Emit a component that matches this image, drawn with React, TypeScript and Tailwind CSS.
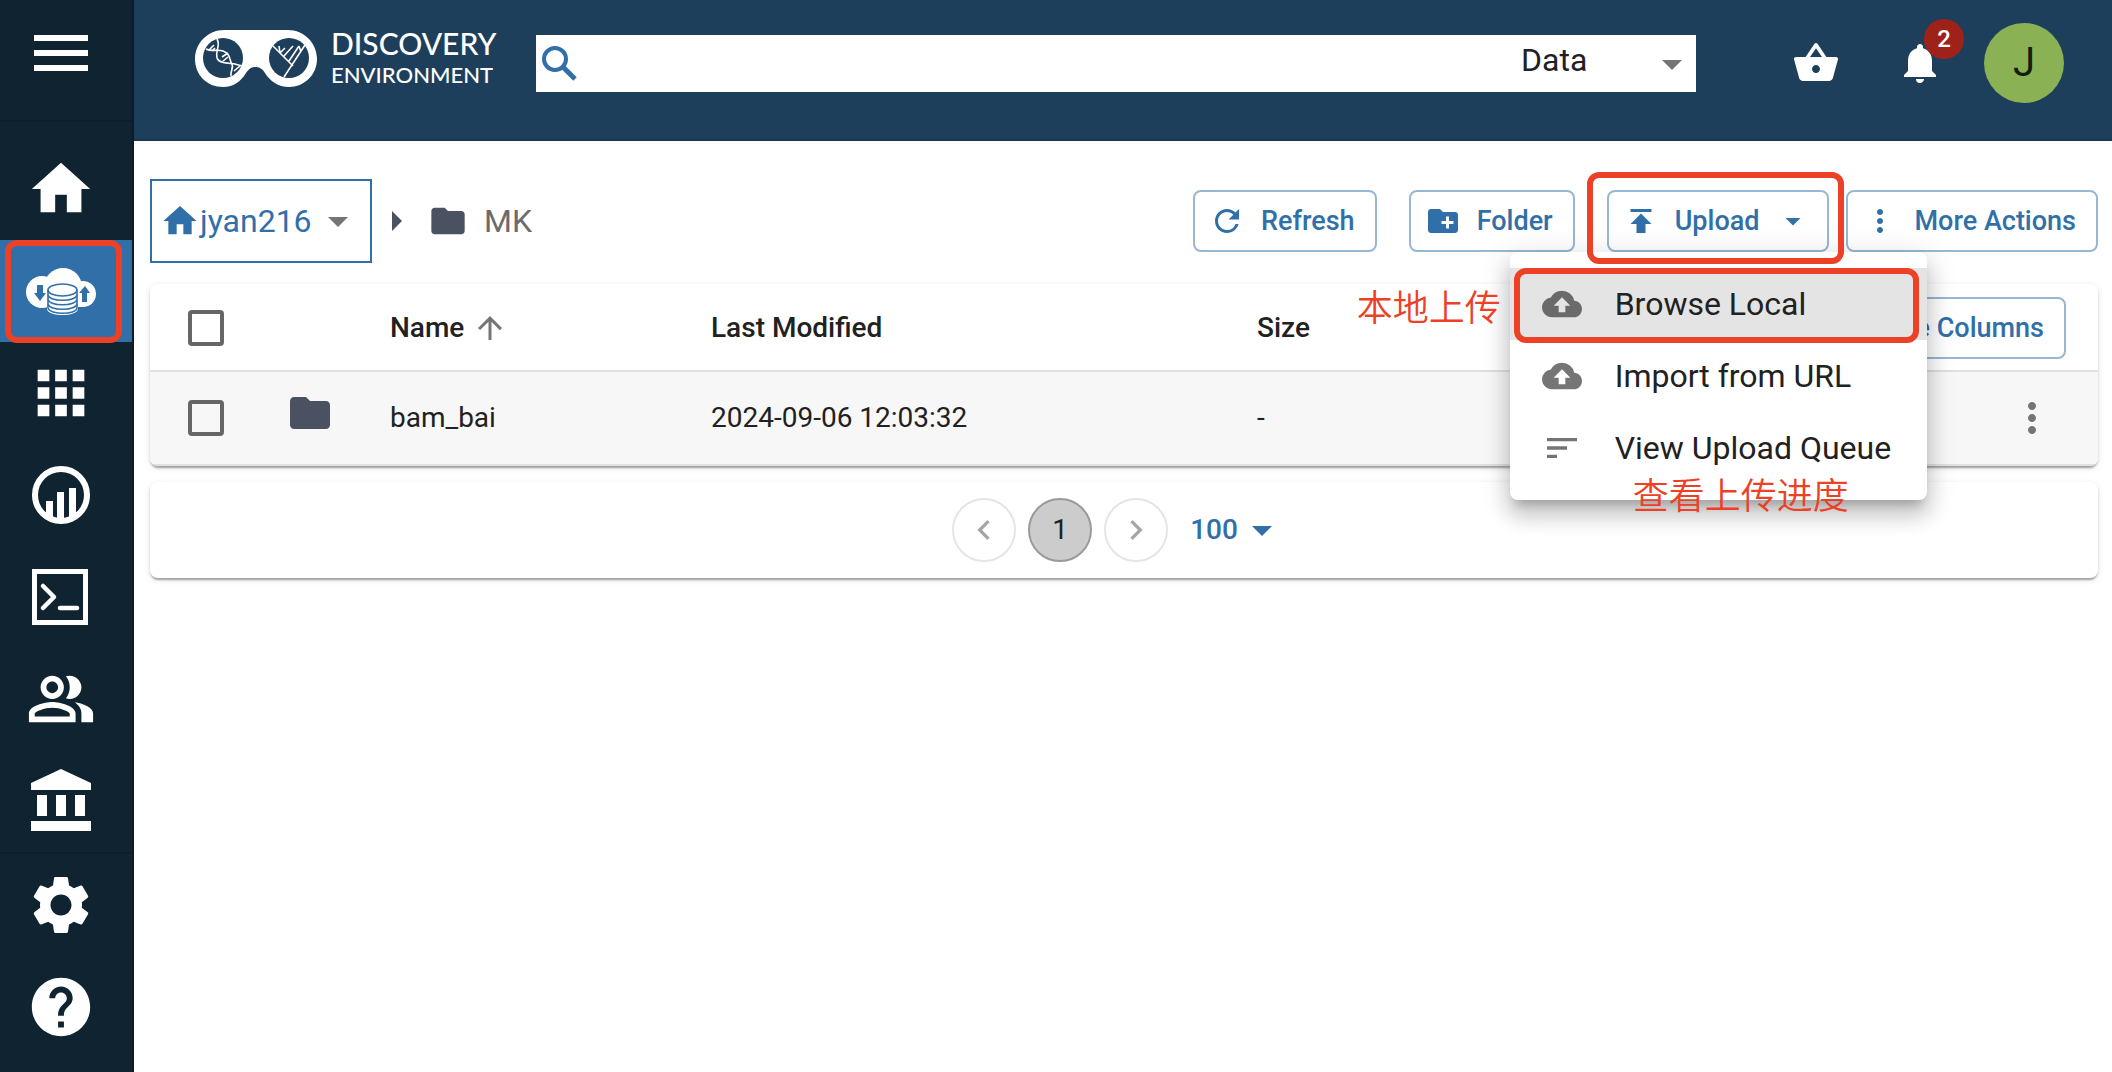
import { useState, type ReactNode } from "react";
import type { IconType } from "react-icons";
import {
  MdApps,
  MdArrowDropDown,
  MdArrowRight,
  MdArrowUpward,
  MdCloudUpload,
  MdCreateNewFolder,
  MdFolder,
  MdHelp,
  MdHome,
  MdMenu,
  MdMoreVert,
  MdNavigateBefore,
  MdNavigateNext,
  MdNotifications,
  MdOutlinePeopleAlt,
  MdPublish,
  MdRefresh,
  MdSettings,
  MdShoppingBasket,
  MdSort,
} from "react-icons/md";

const ICON_LG = "size-[70px]";

function Logo() {
  return (
    <svg viewBox="0 0 124 60" className="h-[60px] w-[124px]" aria-hidden="true">
      <path
        fill="#fff"
        d="M30 1H94C110 1 123 14 123 30C123 46 110 58 95 58C84 58 76 52 71 44C68 39 65 38 61 38C57 38 55 40 52 44C47 52 40 58 29 58C13 58 1 46 1 30C1 14 14 1 30 1Z"
      />
      <circle cx="29" cy="29" r="20" fill="#1e3f5c" />
      <circle cx="95" cy="29" r="20" fill="#1e3f5c" />
      <g fill="none" stroke="#fff" strokeWidth="1.6">
        <path d="M23 10C27 17 21 21 23 29C25 35 36 34 41 35C44 36 46 36 48 37" />
        <path d="M12 20C17 23 23 20 29 22C37 25 35 31 38 35C40 39 36 42 37 47" />
        <path d="M15 21L20 16M18 22L21 19M28 28L34 24M29 32L34 28M40 42L46 37M41 46L45 43" />
        <path d="M79 17L99 37M111 16L90 48M86 24L91 19M90 27L99 17M95 32L105 17M85 17L86 24M105 17L107 23" />
      </g>
    </svg>
  );
}

function DataIcon() {
  return (
    <svg viewBox="0 0 70 50" className="h-[50px] w-[70px]" aria-hidden="true">
      <g fill="#fff">
        <circle cx="16" cy="26" r="16" />
        <circle cx="37" cy="21" r="19" />
        <circle cx="57" cy="28" r="13" />
        <path d="M16 26H57V41H16Z" />
        <path d="M21 24V43C22 51 51 51 52 43V24Z" />
      </g>
      <g fill="none" stroke="#316fa9" strokeWidth="1.6">
        <path d="M22 24V42C24 49 50 49 51 42V24" />
        <ellipse cx="36.500" cy="24" rx="14.500" ry="6" />
        <path d="M22 29C24 36 49 36 51 29M22 33.500C24 40.500 49 40.500 51 33.500M22 38C24 45 49 45 51 38" />
      </g>
      <path
        fill="#316fa9"
        d="M11 19H17V27H20L14 35L8 27H11ZM56 36V27H53L59 20L64 27H61V36Z"
      />
    </svg>
  );
}

function AnalysesIcon() {
  return (
    <svg viewBox="0 0 70 70" className={ICON_LG} aria-hidden="true">
      <circle cx="35" cy="35" r="26" fill="none" stroke="#fff" strokeWidth="6" />
      <path fill="#fff" d="M20 41H27V60L20 55ZM31 32H38V62H31ZM43 28H50V55L43 61Z" />
    </svg>
  );
}

function TerminalIcon() {
  return (
    <svg viewBox="0 0 70 70" className={ICON_LG} aria-hidden="true">
      <path fill="none" stroke="#fff" strokeWidth="5" d="M8.500 9.500H59.500V60.500H8.500Z" />
      <path
        fill="none"
        stroke="#fff"
        strokeWidth="4.500"
        strokeLinecap="round"
        strokeLinejoin="round"
        d="M17 24L28 35L17 46M34 46H51"
      />
    </svg>
  );
}

function BankIcon() {
  return (
    <svg viewBox="0 0 70 70" className={ICON_LG} fill="#fff" aria-hidden="true">
      <path d="M5 17L35 3L65 17V24H5ZM11 29H21V50H11ZM30 29H40V50H30ZM49 29H59V50H49ZM5 55H65V65H5Z" />
    </svg>
  );
}

function NavItem({
  label,
  active = false,
  children,
}: {
  label: string;
  active?: boolean;
  children: ReactNode;
}) {
  return (
    <a
      href="#"
      aria-label={label}
      aria-current={active ? "page" : undefined}
      className={`relative flex h-[102px] items-center justify-center pr-[10px] text-white ${
        active ? "bg-[#316fa9]" : ""
      }`}
    >
      {children}
      {active && (
        <span className="absolute top-0 right-[10px] -bottom-px left-[5px] rounded-xl border-[6px] border-[#ec4126]" />
      )}
    </a>
  );
}

function Sidebar() {
  return (
    <nav className="w-[134px] shrink-0 border-r-2 border-[#0b1c28] bg-[#0f2331]">
      <div className="flex h-[122px] justify-center border-b-2 border-[#0d1f2b] pt-[17px] pr-[10px]">
        <button type="button" aria-label="Menu" className="h-[72px] text-white">
          <MdMenu className="size-[72px]" />
        </button>
      </div>
      <div className="border-b-2 border-[#0d1f2b] pt-4">
        <NavItem label="Home">
          <MdHome className={ICON_LG} />
        </NavItem>
        <NavItem label="Data" active>
          <DataIcon />
        </NavItem>
        <NavItem label="Apps">
          <MdApps className={ICON_LG} />
        </NavItem>
        <NavItem label="Analyses">
          <AnalysesIcon />
        </NavItem>
        <NavItem label="Cloud Shell">
          <TerminalIcon />
        </NavItem>
        <NavItem label="Teams">
          <MdOutlinePeopleAlt className={ICON_LG} />
        </NavItem>
        <NavItem label="Instant Launches">
          <BankIcon />
        </NavItem>
      </div>
      <NavItem label="Settings">
        <MdSettings className={ICON_LG} />
      </NavItem>
      <NavItem label="Help">
        <MdHelp className={ICON_LG} />
      </NavItem>
    </nav>
  );
}

function Header() {
  return (
    <header className="flex h-[141px] items-start border-b-2 border-[#1b3852] bg-[#1e3f5c] pr-12 pl-[60px]">
      <a href="#" className="mt-[29px] flex items-start text-white" aria-label="Discovery Environment">
        <Logo />
        <span className="ml-[13px] flex w-[165px] flex-col font-['Lato'] font-medium">
          <span className="text-[30px] leading-[28px]">DISCOVERY</span>
          <span className="mt-1 text-[22px] leading-[28px]">ENVIRONMENT</span>
        </span>
      </a>
      <form className="mt-[35px] ml-[40px] flex h-[57px] flex-1 items-center bg-white">
        <button type="submit" aria-label="Search" className="mb-0.5 ml-[6px] text-[#316fa9]">
          <svg viewBox="0 0 36 36" className="size-9" fill="none" stroke="currentColor" strokeWidth="4">
            <circle cx="13" cy="14" r="11" />
            <path d="M21 22L33 34" strokeWidth="5" />
          </svg>
        </button>
        <input aria-label="Search data" className="h-full min-w-0 flex-1 px-3 text-[32px] outline-none" />
        <div className="relative mb-2 flex w-[175px] items-center">
          <select
            aria-label="Search category"
            className="w-full appearance-none bg-transparent text-[32px] leading-[40px] text-[#212121] outline-none"
          >
            <option>Data</option>
          </select>
          <MdArrowDropDown className="pointer-events-none absolute -bottom-2 right-0 size-12 text-[#757575]" />
        </div>
      </form>
      <div className="mt-[23px] ml-[96px] flex h-20 items-center">
        <button type="button" aria-label="Bag" className="text-white">
          <MdShoppingBasket className="size-12" />
        </button>
        <button type="button" aria-label="Notifications" className="relative ml-14 text-white">
          <MdNotifications className="size-12" />
          <span className="absolute -top-5 -right-5 flex size-10 items-center justify-center rounded-full bg-[#9e2219] text-2xl font-medium">
            2
          </span>
        </button>
        <button
          type="button"
          aria-label="Account"
          className="ml-10 size-20 rounded-full bg-[#8ab153] text-[40px] text-[#161d0c]"
        >
          J
        </button>
      </div>
    </header>
  );
}

function ActionButton({
  icon: Icon,
  label,
  dropdown = false,
}: {
  icon?: IconType;
  label: string;
  dropdown?: boolean;
}) {
  return (
    <button
      type="button"
      className="flex h-[62px] items-center gap-4 rounded-lg border-2 border-[#97b7d4] pr-5 pl-[14px] text-[27px] font-medium whitespace-nowrap text-[#316fa9]"
    >
      {Icon && <Icon className="size-9" />}
      {label}
      {dropdown && <MdArrowDropDown className="-mr-1 size-9" />}
    </button>
  );
}

function MenuItem({
  icon: Icon,
  label,
  active = false,
}: {
  icon: IconType;
  label: string;
  active?: boolean;
}) {
  return (
    <li role="none" className={`relative ${active ? "bg-[#e4e4e4]" : ""}`}>
      <button
        type="button"
        role="menuitem"
        className="flex h-[72px] w-full items-center gap-[33px] pl-8 text-[32px] whitespace-nowrap text-[#212121]"
      >
        <Icon className={active ? "size-10 text-[#6a6a6a]" : "size-10 text-[#757575]"} />
        {label}
      </button>
      {active && (
        <span className="pointer-events-none absolute -bottom-[3px] top-0 right-2 left-1 rounded-xl border-[6px] border-[#ec4126]" />
      )}
    </li>
  );
}

function UploadMenu() {
  return (
    <ul
      role="menu"
      className="absolute top-[62px] -left-[97px] z-10 w-[417px] rounded-lg bg-white py-4 shadow-[0_10px_10px_-6px_rgba(0,0,0,0.2),0_16px_20px_2px_rgba(0,0,0,0.14),0_6px_28px_4px_rgba(0,0,0,0.12)]"
    >
      <MenuItem icon={MdCloudUpload} label="Browse Local" active />
      <MenuItem icon={MdCloudUpload} label="Import from URL" />
      <MenuItem icon={MdSort} label="View Upload Queue" />
      <li
        role="none"
        className="absolute top-[21px] right-full mr-[9px] text-[36px] leading-[72px] font-[350] whitespace-nowrap text-[#ec4126]"
      >
        本地上传
      </li>
      <li
        role="none"
        className="absolute -bottom-[33px] left-[123px] text-[36px] leading-[72px] font-[350] whitespace-nowrap text-[#ec4126]"
      >
        查看上传进度
      </li>
    </ul>
  );
}

function Toolbar() {
  return (
    <div className="flex items-center">
      <button
        type="button"
        className="flex h-[84px] w-[222px] items-center border-2 border-[#316fa9] pl-2 text-[32px] text-[#316fa9]"
      >
        <MdHome className="size-10" />
        jyan216
        <MdArrowDropDown className="ml-0.5 size-12 text-[#757575]" />
      </button>
      <MdArrowRight className="size-12 text-[#4a5160]" />
      <a href="#" className="ml-2 flex items-center gap-4 text-[32px] text-[#6b6b6b]">
        <MdFolder className="size-10 text-[#4a5160]" />
        MK
      </a>
      <div className="ml-auto flex items-center">
        <ActionButton icon={MdRefresh} label="Refresh" />
        <div className="ml-8">
          <ActionButton icon={MdCreateNewFolder} label="Folder" />
        </div>
        <div className="relative ml-8">
          <ActionButton icon={MdPublish} label="Upload" dropdown />
          <UploadMenu />
          <span className="pointer-events-none absolute -top-[18px] -right-[15px] -bottom-3 -left-5 z-20 rounded-xl border-[6px] border-[#ec4126]" />
        </div>
        <div className="ml-[17px]">
          <ActionButton icon={MdMoreVert} label="More Actions" />
        </div>
      </div>
    </div>
  );
}

function Checkbox({ label }: { label: string }) {
  const [checked, setChecked] = useState(false);
  return (
    <input
      type="checkbox"
      aria-label={label}
      checked={checked}
      onChange={(event) => setChecked(event.target.checked)}
      className="block size-9 appearance-none rounded-[4px] border-4 border-[#666] checked:bg-[#316fa9]"
    />
  );
}

const PAPER =
  "rounded-lg bg-white shadow-[0_4px_2px_-2px_rgba(0,0,0,0.2),0_2px_2px_0_rgba(0,0,0,0.14),0_2px_6px_0_rgba(0,0,0,0.12)]";

function FileTable() {
  return (
    <div className={`mt-[21px] overflow-hidden ${PAPER}`}>
      <table className="w-full table-fixed border-collapse text-left text-[28px] text-[#212121]">
        <colgroup>
          <col className="w-[140px]" />
          <col className="w-[100px]" />
          <col className="w-[321px]" />
          <col className="w-[546px]" />
          <col />
          <col className="w-[500px]" />
        </colgroup>
        <thead>
          <tr className="h-[87px] border-b-2 border-[#e0e0e0] [&>th]:pt-0.5">
            <th className="pl-[38px]">
              <Checkbox label="Select all" />
            </th>
            <th />
            <th className="font-medium">
              <button type="button" className="flex items-center gap-2">
                Name
                <MdArrowUpward className="size-9 text-[#757575]" />
              </button>
            </th>
            <th className="font-medium">Last Modified</th>
            <th className="font-medium">Size</th>
            <th className="pr-8">
              <div className="flex justify-end">
                <ActionButton label="Customize Columns" />
              </div>
            </th>
          </tr>
        </thead>
        <tbody>
          <tr className="h-[94px] border-b-2 border-[#e0e0e0] bg-[#f7f7f7]">
            <td className="pl-[38px]">
              <Checkbox label="Select bam_bai" />
            </td>
            <td>
              <MdFolder className="mb-[10px] -ml-1 size-12 text-[#4a5160]" />
            </td>
            <td>bam_bai</td>
            <td>2024-09-06 12:03:32</td>
            <td>-</td>
            <td className="pr-[42px]">
              <button type="button" aria-label="Row actions" className="ml-auto block text-[#757575]">
                <MdMoreVert className="size-12" />
              </button>
            </td>
          </tr>
        </tbody>
      </table>
    </div>
  );
}

function Pagination() {
  const circle = "flex size-16 items-center justify-center rounded-full border-2";
  return (
    <div className={`mt-4 flex h-24 items-center justify-center gap-3 ${PAPER}`}>
      <button type="button" aria-label="Previous page" className={`${circle} border-[#e5e5e5] text-[#a6a6a6]`}>
        <MdNavigateBefore className="size-10" />
      </button>
      <button type="button" className={`${circle} border-[#9a9a9a] bg-[#ccc] text-[28px] text-[#212121]`}>
        1
      </button>
      <button type="button" aria-label="Next page" className={`${circle} border-[#e5e5e5] text-[#a6a6a6]`}>
        <MdNavigateNext className="size-10" />
      </button>
      <button type="button" className="ml-[10px] flex items-center pr-[10px] text-[28px] font-medium text-[#316fa9]">
        100
        <MdArrowDropDown className="size-12" />
      </button>
    </div>
  );
}

export default function App() {
  return (
    <div className="flex min-h-screen bg-white font-['Roboto','Noto_Sans_CJK_SC',sans-serif]">
      <Sidebar />
      <div className="min-w-0 flex-1">
        <Header />
        <main className="pt-[38px] pr-[14px] pl-4">
          <Toolbar />
          <FileTable />
          <Pagination />
        </main>
      </div>
    </div>
  );
}
